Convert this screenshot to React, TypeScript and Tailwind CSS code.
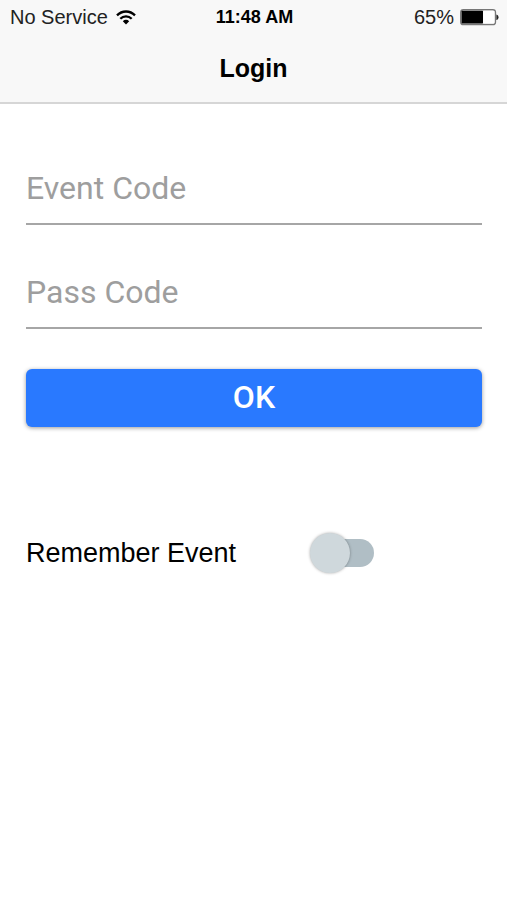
import { useState, type FormEvent } from "react";

const StatusBar = () => {
	return (
		<div className="grid grid-cols-3 items-center h-[34px] pl-[10px] pr-2 text-xl text-[#222]">
			<div className="flex items-center gap-2 whitespace-nowrap">
				<span>No Service</span>
				<WifiIcon />
			</div>
			<span className="text-center text-lg font-bold text-black whitespace-nowrap">
				11:48 AM
			</span>
			<div className="flex items-center justify-end gap-[6px]">
				<span>65%</span>
				<BatteryIcon />
			</div>
		</div>
	);
};

const WifiIcon = () => (
	<svg width="20" height="15" viewBox="0 0 20 15" fill="none" aria-hidden="true">
		<path d="M1 5.4C6 0.2 14 0.2 19 5.4" stroke="#000" strokeWidth="2.3" />
		<path d="M4.3 8.8C7.5 5.6 12.5 5.6 15.7 8.8" stroke="#000" strokeWidth="2.3" />
		<path d="M6.8 11.2C8.6 9.4 11.4 9.4 13.2 11.2L10 14.4Z" fill="#000" />
	</svg>
);

const BatteryIcon = () => (
	<svg width="39" height="17" viewBox="0 0 39 17" fill="none" aria-hidden="true">
		<rect x="0.8" y="0.8" width="34.6" height="14.8" rx="2.6" stroke="#777" strokeWidth="1.5" />
		<rect x="1.6" y="1.8" width="21.5" height="12.8" rx="0.8" fill="#000" />
		<rect x="23.1" y="1.8" width="11.4" height="12.8" rx="0.8" fill="#fff" />
		<path d="M36.4 5.4C39.2 6 39.2 10.4 36.4 11Z" fill="#222" />
	</svg>
);

type CodeFieldProps = {
	label: string;
	value: string;
	onChange: (value: string) => void;
};

const CodeField = ({ label, value, onChange }: CodeFieldProps) => {
	return (
		<input
			type="text"
			aria-label={label}
			className="block w-full h-[70px] pb-[2px] border-b-2 border-[#a6a6a6] bg-transparent font-[Roboto,sans-serif] text-[32px] text-black placeholder:text-[#9e9e9e] placeholder:opacity-100 outline-none focus:border-[#2979ff]"
			placeholder={label}
			value={value}
			onChange={(e) => onChange(e.target.value)}
		/>
	);
};

export default function App() {
	const [eventCode, setEventCode] = useState("");
	const [passCode, setPassCode] = useState("");
	const [remember, setRemember] = useState(false);

	function handleSubmit(e: FormEvent) {
		e.preventDefault();
	}

	return (
		<div className="min-h-screen bg-white text-black font-['Liberation_Sans',Arial,sans-serif]">
			<header className="border-b-2 border-[#d6d6d6] bg-[#f8f8f8]">
				<StatusBar />
				<h1 className="py-4 text-center text-[25px] leading-9 font-bold">
					Login
				</h1>
			</header>
			<form className="pl-[26px] pr-[25px] pt-[51px]" onSubmit={handleSubmit}>
				<div className="flex flex-col gap-[34px]">
					<CodeField
						label="Event Code"
						value={eventCode}
						onChange={setEventCode}
					/>
					<CodeField
						label="Pass Code"
						value={passCode}
						onChange={setPassCode}
					/>
				</div>
				<button
					type="submit"
					className="mt-10 w-full h-[58px] pb-[2px] rounded-md bg-[#2979ff] font-[Roboto,sans-serif] text-[32px] font-medium text-white shadow-[0_1px_4px_rgba(0,0,0,0.4)] cursor-pointer"
				>
					OK
				</button>
				<div className="mt-[105px] flex items-center gap-[74px]">
					<label htmlFor="remember" className="text-[27px] leading-10">
						Remember Event
					</label>
					<span className="relative flex items-center w-16 h-[42px]">
						<input
							id="remember"
							type="checkbox"
							role="switch"
							className="peer ml-1 w-[61px] h-7 appearance-none rounded-full bg-[#b0bec5] cursor-pointer"
							checked={remember}
							onChange={(e) => setRemember(e.target.checked)}
						/>
						<span className="absolute left-0 top-px size-10 rounded-full bg-[#cfd8dc] shadow-[0_0_3px_rgba(0,0,0,0.35)] pointer-events-none peer-checked:left-6 peer-checked:bg-[#2979ff]" />
					</span>
				</div>
			</form>
		</div>
	);
}
